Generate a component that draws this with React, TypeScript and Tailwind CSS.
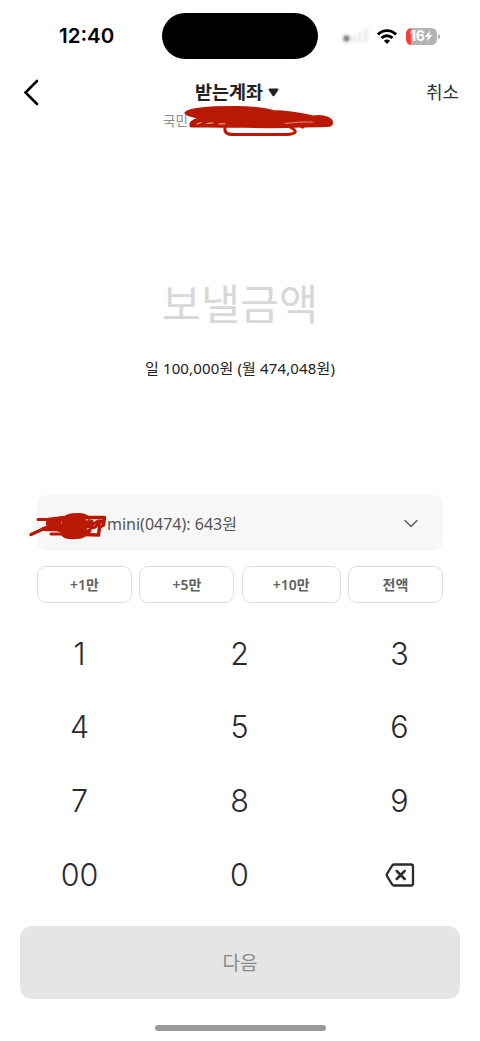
import React, { useState } from 'react';

const QUICK_AMOUNTS = [
  { label: '+1만', value: 10000, width: 'w-[95px]' },
  { label: '+5만', value: 50000, width: 'w-[95px]' },
  { label: '+10만', value: 100000, width: 'w-[99px]' },
  { label: '전액', value: 643, width: 'w-[95px]' },
];

const KEYS = ['1', '2', '3', '4', '5', '6', '7', '8', '9', '00', '0'];

const StatusBar: React.FC = () => (
  <div className="flex h-[72px] items-center">
    <div className="w-[162px] pl-[59px] font-['Inter',sans-serif] text-[20.5px] font-semibold leading-none text-black">
      12:40
    </div>
    <div className="h-[46px] w-[156px] rounded-full bg-black" />
    <div className="flex flex-1 items-center pl-[22px]">
      <svg className="mr-[5px] h-6 w-8" viewBox="0 0 32 24">
        <g className="blur-[1.5px]">
          <circle cx="6.5" cy="14.5" r="3.2" fill="#777" />
          <rect x="12" y="11" width="4" height="8" rx="1" fill="#ececec" />
          <rect x="18" y="8" width="4" height="11" rx="1" fill="#ececec" />
          <rect x="24" y="4" width="4" height="15" rx="1" fill="#ececec" />
        </g>
      </svg>
      <svg className="h-[15px] w-5" viewBox="0 0 20 15" fill="none" stroke="#000" strokeWidth="2.9">
        <path d="M1 5.4C6 .3 14 .3 19 5.4" />
        <path d="M4.5 9C7.6 5.9 12.4 5.9 15.5 9" />
        <path d="M10 15 6.9 11.7c1.7-1.6 4.5-1.6 6.2 0z" fill="#000" stroke="none" />
      </svg>
      <div className="ml-[9px] flex h-[17px] w-[31px] items-center overflow-hidden rounded-[5.5px] bg-linear-to-r from-[#f5403a] from-[5px] to-[#b3b3b3] to-[5px] pl-[4px] font-['Inter',sans-serif] text-[14px] font-bold leading-none tracking-[-0.4px] text-white">
        16
        <svg className="h-3 w-[9px]" viewBox="0 0 9 12" fill="#fff">
          <path d="M6 .5.8 6.8h3L2.9 11.5 8.4 5H5.2z" />
        </svg>
      </div>
      <div className="ml-px h-[5px] w-[2px] rounded-r-full bg-[#b3b3b3]" />
    </div>
  </div>
);

const AccountScribble: React.FC = () => (
  <svg className="absolute left-[180px] top-[100px] h-10 w-[160px]" viewBox="180 100 160 40" fill="none" stroke="#b91902" strokeLinecap="round" strokeLinejoin="round">
    <path
      d="M186 113C190 109 212 107.500 235 107.500C250 107.500 264 109 273 111.500C292 112 304 115 313 117C326 115 332 120 331.500 123C331 127 324 125 302 126C280 127 262 127 230 126C214 126.500 202 125.500 191 126C190 122 194 120 204 118C196 117 190 116 186 113Z"
      fill="#b91902"
      strokeWidth="3"
    />
    <path d="M225 128C224 135 230 134.500 240 134.500H286C297 134 298 131 290 127" strokeWidth="3" />
    <path d="M302 127 303 127" strokeWidth="3" />
    <path d="M197 124 201 122.500M207 123.500 213 122.800M219 124 225 123.800" stroke="#f1c5bd" strokeWidth="1" />
    <path d="M285 123.500 299 122.200 313 122" stroke="#eba99f" strokeWidth=".8" />
  </svg>
);

const NameScribble: React.FC = () => (
  <svg className="absolute left-[28px] top-[508px] h-9 w-20" viewBox="28 508 80 36" fill="none" stroke="#b91902" strokeLinecap="round" strokeLinejoin="round" strokeWidth="3">
    <path d="M38 519.500H50L62 517.500" />
    <path d="M48 519 64 517.500 66 532 56 530 46 530 42 529 50 525.500 47 524Z" fill="#b91902" strokeWidth="2.5" />
    <path d="M31 534.500 42 529.500 54 526" strokeWidth="3.5" />
    <path d="M51 534H66" />
    <path d="M62 520C67 514 73 514.500 80 514.500C86 514.500 87 517 89 518L88 526 90 531C86 534 84 537.500 77 537.500C70 538 63 538 62 533Z" fill="#b91902" />
    <path d="M86 517.500H104.500L103.500 525 99.500 527 98.500 535 84 534.500" strokeWidth="3.5" />
    <path d="M84 525 92 521 90 526 98 521 102 521 95 527 88 529" strokeWidth="3" />
    <path d="M86 519.800 88 519.800M87 529 88.500 528.500" stroke="#f8e5e2" strokeWidth="1" />
    <path d="M93 531 97 529.500 96 531.500Z" fill="#f8f8f8" stroke="#f8e5e2" strokeWidth=".6" />
    <path d="M61.500 522V523" stroke="#f0b5ab" strokeWidth=".8" />
  </svg>
);

const BackspaceIcon: React.FC = () => (
  <svg className="h-6 w-[30px]" viewBox="0 0 30 24" fill="none" stroke="#2b2b2d" strokeWidth="2.3" strokeLinecap="round" strokeLinejoin="round">
    <path d="M9.2 1.500H26Q28 1.500 28 3.500V20.500Q28 22.500 26 22.500H9.200Q8 22.500 7.200 21.500L2.300 13.600Q1.300 12 2.300 10.400L7.200 2.500Q8 1.500 9.200 1.500Z" />
    <path d="M11.700 8 19.700 16M19.700 8 11.700 16" strokeWidth="2.500" />
  </svg>
);

const App: React.FC = () => {
  const [amount, setAmount] = useState('');

  const handleKey = (key: string) => {
    setAmount(prev => (prev + key).replace(/^0+/, '').slice(0, 9));
  };

  const handleAdd = (value: number) => {
    setAmount(prev => String(Number(prev || 0) + value));
  };

  return (
    <div className="relative flex h-[1041px] w-[480px] flex-col overflow-hidden bg-white font-['Noto_Sans_CJK_KR',sans-serif]">
      <StatusBar />

      <header className="flex h-10 items-center px-5">
        <button className="flex w-[120px] pl-[3px]">
          <svg className="h-7 w-[18px]" viewBox="0 0 18 28" fill="none" stroke="#000" strokeWidth="2.6" strokeLinecap="round">
            <path d="M14 3 2.500 14.500 14 26" />
          </svg>
        </button>
        <button className="flex flex-1 items-center justify-center gap-[5px] pb-[2px] pr-[6px] text-[18.5px] font-bold leading-none text-[#222]">
          받는계좌
          <svg className="mt-[2px] h-[9px] w-[11px]" viewBox="0 0 11 9" fill="#222">
            <path d="M1.500.5H9.500Q11 .7 10.300 2.100L6.500 7.700Q5.500 9 4.500 7.700L.7 2.100Q0 .7 1.500.5Z" />
          </svg>
        </button>
        <button className="w-[120px] pb-[2px] pr-px text-right text-[18px] leading-none text-[#333]">취소</button>
      </header>
      <p className="h-[157px] pl-[163px] text-[13.5px] leading-[17px] text-[#8c8c8c]">국민</p>

      <section className="flex h-[226px] flex-col items-center">
        <h1 className="h-[84px] text-[42.5px] font-normal leading-[66px] text-[#d8d8d8]">
          {amount ? `${Number(amount).toLocaleString()}원` : '보낼금액'}
        </h1>
        <p className="font-['Noto_Sans','Noto_Sans_CJK_KR',sans-serif] text-[15px] leading-[30px] tracking-[0.14px] text-[#222]">
          일 100,000원 (월 474,048원)
        </p>
      </section>

      <button className="mx-[37px] flex h-[56px] items-center justify-between rounded-[10px] bg-[#f7f7f7] pl-[70px] pr-[25px] font-['Noto_Sans','Noto_Sans_CJK_KR',sans-serif] text-[16px] text-[#555]">
        <span className="pt-[2px]">mini(0474): 643원</span>
        <svg className="h-[9px] w-[14px]" viewBox="0 0 14 9" fill="none" stroke="#555" strokeWidth="1.3" strokeLinecap="round">
          <path d="M1 1.500 7 7.500 13 1.500" />
        </svg>
      </button>

      <div className="mx-[37px] mt-[15px] flex h-[37px] justify-between">
        {QUICK_AMOUNTS.map(item => (
          <button
            key={item.label}
            onClick={() => handleAdd(item.value)}
            className={`${item.width} rounded-[9px] border border-[#dedede] font-['Noto_Sans','Noto_Sans_CJK_KR',sans-serif] text-[14px] font-semibold leading-none text-[#606060]`}
          >
            {item.label}
          </button>
        ))}
      </div>

      <div className="mt-[14px] grid h-[295px] grid-cols-3 grid-rows-4 font-['Inter',sans-serif] text-[30.5px] font-[350] text-[#2b2b2d]">
        {KEYS.map(key => (
          <button key={key} onClick={() => handleKey(key)} className="flex items-center justify-center pr-px leading-none">
            {key}
          </button>
        ))}
        <button onClick={() => setAmount(prev => prev.slice(0, -1))} className="flex items-center justify-center">
          <BackspaceIcon />
        </button>
      </div>

      <button className="mx-5 mt-[14px] h-[73px] rounded-[12px] bg-[#e5e5e5] text-[19px] font-normal text-[#888]">다음</button>
      <div className="mx-auto mt-[26px] h-[6px] w-[171px] rounded-full bg-[#9b9b9b]" />

      <AccountScribble />
      <NameScribble />
    </div>
  );
};

export default App;
